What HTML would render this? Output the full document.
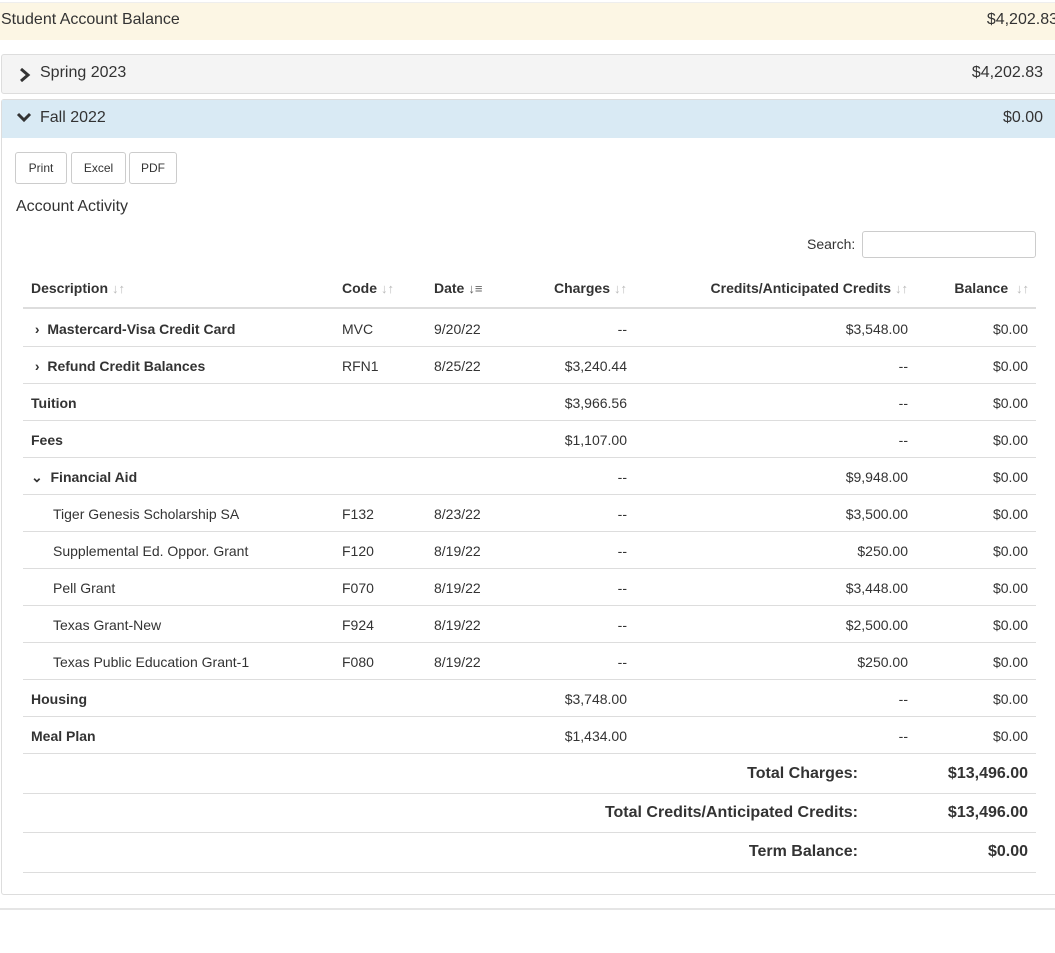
<!DOCTYPE html>
<html><head><style>
*{box-sizing:border-box;margin:0;padding:0}
body{width:1055px;height:953px;background:#fff;font-family:"Liberation Sans",sans-serif;color:#333;position:relative;overflow:hidden}
.a{position:absolute}
.r{position:absolute;left:23px;width:1013px;height:37px;border-bottom:1px solid #ddd;font-size:14px}
.r span{position:absolute;top:11px;white-space:nowrap}
.b{font-weight:bold}
.rt{text-align:right}
.btn{position:absolute;top:152px;height:32px;border:1px solid #ccc;border-radius:3px;font-size:12px;line-height:30px;text-align:center;background:#fff}
.s{color:#bbb;font-weight:bold;font-size:13px;margin-left:4px}
</style></head><body>
<div class="a" style="left:0;top:2px;width:1055px;height:38px;background:#fcf6e4;border-top:1px solid #eee"></div>
<div class="a" style="left:1px;top:11px;font-size:16px">Student Account Balance</div>
<div class="a" style="right:-3px;top:11px;font-size:16px">$4,202.83</div>

<div class="a" style="left:1px;top:54px;width:1060px;height:40px;background:#f4f4f4;border:1px solid #ddd;border-radius:3px"></div>
<svg class="a" style="left:19px;top:68px" width="12" height="14" viewBox="0 0 12 14"><path d="M2 1 L9 7 L2 13" stroke="#333" stroke-width="3" fill="none"/></svg>
<div class="a" style="left:40px;top:64px;font-size:16px">Spring 2023</div>
<div class="a" style="right:12px;top:64px;font-size:16px">$4,202.83</div>

<div class="a" style="left:1px;top:99px;width:1060px;height:796px;border:1px solid #ddd;border-radius:3px"></div>
<div class="a" style="left:2px;top:100px;width:1060px;height:38px;background:#d9eaf4"></div>
<svg class="a" style="left:16px;top:112px" width="16" height="12" viewBox="0 0 16 12"><path d="M2 2 L8 8 L14 2" stroke="#333" stroke-width="3" fill="none"/></svg>
<div class="a" style="left:40px;top:109px;font-size:16px">Fall 2022</div>
<div class="a" style="right:12px;top:109px;font-size:16px">$0.00</div>

<div class="btn" style="left:15px;width:52px">Print</div>
<div class="btn" style="left:71px;width:55px">Excel</div>
<div class="btn" style="left:129px;width:48px">PDF</div>
<div class="a" style="left:16px;top:198px;font-size:16px">Account Activity</div>
<div class="a" style="left:807px;top:236px;font-size:14px">Search:</div>
<div class="a" style="left:862px;top:231px;width:174px;height:27px;border:1px solid #ccc;border-radius:3px"></div>

<div class="r b" style="top:272px;border-bottom:2px solid #ddd">
<span style="left:8px;top:8px">Description<span class="s" style="position:static">↓↑</span></span>
<span style="left:319px;top:8px">Code<span class="s" style="position:static">↓↑</span></span>
<span style="left:411px;top:8px">Date<span class="s" style="position:static;color:#666">↓≡</span></span>
<span style="right:409px;top:8px">Charges<span class="s" style="position:static">↓↑</span></span>
<span style="right:128px;top:8px">Credits/Anticipated Credits<span class="s" style="position:static">↓↑</span></span>
<span style="right:7px;top:8px">Balance <span class="s" style="position:static">↓↑</span></span>
</div>

<div class="r" style="top:310px"><span class="b" style="left:8px">&nbsp;›&nbsp;&nbsp;Mastercard-Visa Credit Card</span><span style="left:319px">MVC</span><span style="left:411px">9/20/22</span><span style="right:409px">--</span><span style="right:128px">$3,548.00</span><span style="right:8px">$0.00</span></div>
<div class="r" style="top:347px"><span class="b" style="left:8px">&nbsp;›&nbsp;&nbsp;Refund Credit Balances</span><span style="left:319px">RFN1</span><span style="left:411px">8/25/22</span><span style="right:409px">$3,240.44</span><span style="right:128px">--</span><span style="right:8px">$0.00</span></div>
<div class="r" style="top:384px"><span class="b" style="left:8px">Tuition</span><span style="right:409px">$3,966.56</span><span style="right:128px">--</span><span style="right:8px">$0.00</span></div>
<div class="r" style="top:421px"><span class="b" style="left:8px">Fees</span><span style="right:409px">$1,107.00</span><span style="right:128px">--</span><span style="right:8px">$0.00</span></div>
<div class="r" style="top:458px"><span class="b" style="left:8px">⌄&nbsp; Financial Aid</span><span style="right:409px">--</span><span style="right:128px">$9,948.00</span><span style="right:8px">$0.00</span></div>
<div class="r" style="top:495px"><span style="left:30px">Tiger Genesis Scholarship SA</span><span style="left:319px">F132</span><span style="left:411px">8/23/22</span><span style="right:409px">--</span><span style="right:128px">$3,500.00</span><span style="right:8px">$0.00</span></div>
<div class="r" style="top:532px"><span style="left:30px">Supplemental Ed. Oppor. Grant</span><span style="left:319px">F120</span><span style="left:411px">8/19/22</span><span style="right:409px">--</span><span style="right:128px">$250.00</span><span style="right:8px">$0.00</span></div>
<div class="r" style="top:569px"><span style="left:30px">Pell Grant</span><span style="left:319px">F070</span><span style="left:411px">8/19/22</span><span style="right:409px">--</span><span style="right:128px">$3,448.00</span><span style="right:8px">$0.00</span></div>
<div class="r" style="top:606px"><span style="left:30px">Texas Grant-New</span><span style="left:319px">F924</span><span style="left:411px">8/19/22</span><span style="right:409px">--</span><span style="right:128px">$2,500.00</span><span style="right:8px">$0.00</span></div>
<div class="r" style="top:643px"><span style="left:30px">Texas Public Education Grant-1</span><span style="left:319px">F080</span><span style="left:411px">8/19/22</span><span style="right:409px">--</span><span style="right:128px">$250.00</span><span style="right:8px">$0.00</span></div>
<div class="r" style="top:680px"><span class="b" style="left:8px">Housing</span><span style="right:409px">$3,748.00</span><span style="right:128px">--</span><span style="right:8px">$0.00</span></div>
<div class="r" style="top:717px"><span class="b" style="left:8px">Meal Plan</span><span style="right:409px">$1,434.00</span><span style="right:128px">--</span><span style="right:8px">$0.00</span></div>

<div class="r b" style="top:754px;height:40px;font-size:16px"><span style="right:178px;top:11px">Total Charges:</span><span style="right:8px;top:11px">$13,496.00</span></div>
<div class="r b" style="top:794px;height:39px;font-size:16px"><span style="right:178px;top:10px">Total Credits/Anticipated Credits:</span><span style="right:8px;top:10px">$13,496.00</span></div>
<div class="r b" style="top:833px;height:40px;font-size:16px"><span style="right:178px;top:10px">Term Balance:</span><span style="right:8px;top:10px">$0.00</span></div>

<div class="a" style="left:0;top:908px;width:1055px;border-top:2px solid #e5e5e5"></div>
</body></html>
